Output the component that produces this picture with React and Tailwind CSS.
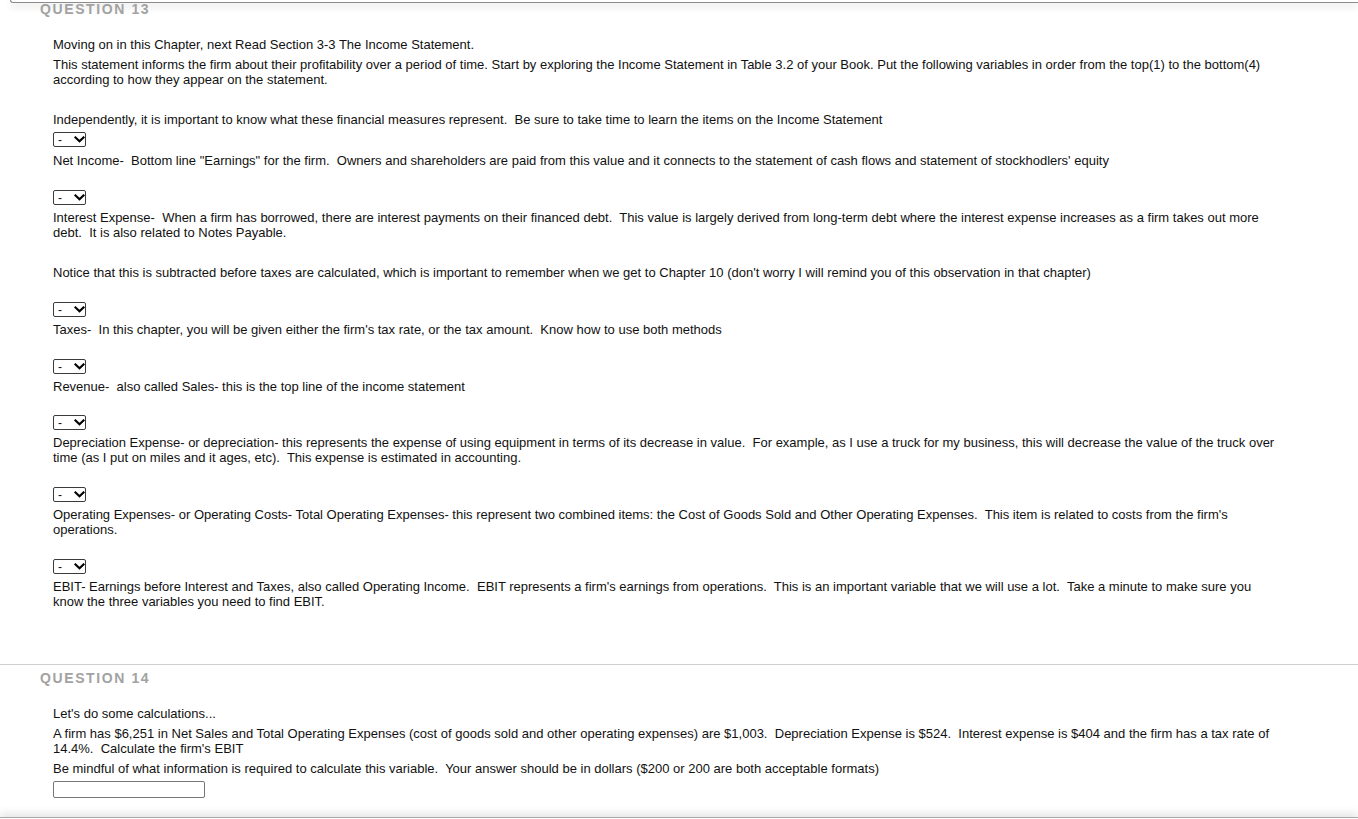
import React from 'react';

function Dropdown() {
  return (
    <div className="flex h-[15px] w-[33px] items-center rounded-[2px] border border-[#3b3b3b] bg-white pl-[4px] text-[12px] leading-none">
      <span className="w-[14px]">-</span>
      <svg width="11" height="7" viewBox="0 0 11 7" className="ml-[2px]">
        <path d="M1.5 1.5 L5.5 5.2 L9.5 1.5" fill="none" stroke="#000" strokeWidth="2.2" strokeLinecap="square" />
      </svg>
    </div>
  );
}

function Item({ top, children }) {
  return (
    <div className={top}>
      <Dropdown />
      <p className="mt-[5px]">{children}</p>
    </div>
  );
}

export default function App() {
  return (
    <div className="min-h-[819px] bg-white font-['Liberation_Sans',Arial,sans-serif] text-[13px] leading-[15px] text-[#111]">
      <div className="ml-[10px] h-[3px] rounded-bl-[6px] border-b border-l border-[#8c8c8c] shadow-[0_3px_8px_rgba(0,0,0,0.16)]" />

      <section className="pr-[81px]">
        <h3 className="-mt-[2px] pl-[40px] text-[14px] font-bold leading-[16px] tracking-[1.6px] text-[#a2a2a2]">
          QUESTION 13
        </h3>
        <div className="pl-[53px]">
          <p className="mt-[20px]">Moving on in this Chapter, next Read Section 3-3 The Income Statement.</p>
          <p className="mt-[5px]">
            This statement informs the firm about their profitability over a period of time. Start by exploring the Income Statement in Table 3.2 of your Book. Put the following variables in order from the top(1) to the bottom(4) according to how they appear on the statement.
          </p>
          <p className="mt-[25px]">
            Independently, it is important to know what these financial measures represent.{'\u00a0'} Be sure to take time to learn the items on the Income Statement
          </p>
          <div className="mt-[5px]">
            <Dropdown />
            <p className="mt-[6px]">
              Net Income-{'\u00a0'} Bottom line "Earnings" for the firm.{'\u00a0'} Owners and shareholders are paid from this value and it connects to the statement of cash flows and statement of stockhodlers' equity
            </p>
          </div>
          <Item top="mt-[22px]">
            Interest Expense-{'\u00a0'} When a firm has borrowed, there are interest payments on their financed debt.{'\u00a0'} This value is largely derived from long-term debt where the interest expense increases as a firm takes out more debt.{'\u00a0'} It is also related to Notes Payable.
          </Item>
          <p className="mt-[25px]">
            Notice that this is subtracted before taxes are calculated, which is important to remember when we get to Chapter 10 (don't worry I will remind you of this observation in that chapter)
          </p>
          <Item top="mt-[22px]">
            Taxes-{'\u00a0'} In this chapter, you will be given either the firm's tax rate, or the tax amount.{'\u00a0'} Know how to use both methods
          </Item>
          <Item top="mt-[22px]">Revenue-{'\u00a0'} also called Sales- this is the top line of the income statement</Item>
          <Item top="mt-[21px]">
            Depreciation Expense- or depreciation- this represents the expense of using equipment in terms of its decrease in value.{'\u00a0'} For example, as I use a truck for my business, this will decrease the value of the truck over time (as I put on miles and it ages, etc).{'\u00a0'} This expense is estimated in accounting.
          </Item>
          <Item top="mt-[22px]">
            Operating Expenses- or Operating Costs- Total Operating Expenses- this represent two combined items: the Cost of Goods Sold and Other Operating Expenses.{'\u00a0'} This item is related to costs from the firm's operations.
          </Item>
          <Item top="mt-[22px]">
            EBIT- Earnings before Interest and Taxes, also called Operating Income.{'\u00a0'} EBIT represents a firm's earnings from operations.{'\u00a0'} This is an important variable that we will use a lot.{'\u00a0'} Take a minute to make sure you know the three variables you need to find EBIT.
          </Item>
        </div>
      </section>

      <div className="mt-[55px] border-t border-[#cfcfcf]" />

      <section className="pr-[81px]">
        <h3 className="mt-[5px] pl-[40px] text-[14px] font-bold leading-[16px] tracking-[1.6px] text-[#a2a2a2]">
          QUESTION 14
        </h3>
        <div className="pl-[53px]">
          <p className="mt-[20px]">Let's do some calculations...</p>
          <p className="mt-[5px]">
            A firm has $6,251 in Net Sales and Total Operating Expenses (cost of goods sold and other operating expenses) are $1,003.{'\u00a0'} Depreciation Expense is $524.{'\u00a0'} Interest expense is $404 and the firm has a tax rate of 14.4%.{'\u00a0'} Calculate the firm's EBIT
          </p>
          <p className="mt-[5px]">
            Be mindful of what information is required to calculate this variable.{'\u00a0'} Your answer should be in dollars ($200 or 200 are both acceptable formats)
          </p>
          <input
            type="text"
            className="mt-[5px] block h-[17px] w-[152px] rounded-[2px] border border-[#767676] bg-white px-[2px] text-[12px] outline-none"
          />
        </div>
      </section>

      <div className="mt-[19px] h-[20px] border-t border-[#a8a8a8] shadow-[0_-4px_8px_rgba(0,0,0,0.1)]" />
    </div>
  );
}
